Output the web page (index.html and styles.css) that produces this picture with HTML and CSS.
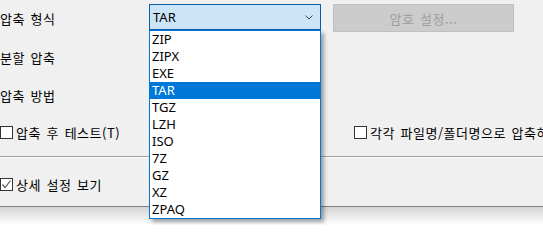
FILE: index.html
```html
<!DOCTYPE html>
<html lang="ko">
<head>
    <meta charset="UTF-8">
    <title>압축 옵션</title>
    <link rel="stylesheet" href="styles.css">
</head>
<body>
    <div class="panel">
        <div class="row row-format">
            <span class="label">압축 형식</span>
            <div class="combo">
                <span>TAR</span>
                <svg class="chevron" width="8" height="5" viewBox="0 0 8 5">
                    <path d="M0.5 0.5 L4 4 L7.5 0.5" fill="none" stroke="#444" stroke-width="1"/>
                </svg>
                <ul class="combo-list">
                    <li>ZIP</li>
                    <li>ZIPX</li>
                    <li>EXE</li>
                    <li class="selected">TAR</li>
                    <li>TGZ</li>
                    <li>LZH</li>
                    <li>ISO</li>
                    <li>7Z</li>
                    <li>GZ</li>
                    <li>XZ</li>
                    <li>ZPAQ</li>
                </ul>
            </div>
            <button class="btn" disabled>암호 설정...</button>
        </div>

        <div class="row row-split">
            <span class="label">분할 압축</span>
        </div>

        <div class="row row-method">
            <span class="label">압축 방법</span>
        </div>

        <div class="row row-checks">
            <label class="check check-left"><span class="box"></span>압축 후 테스트(T)</label>
            <label class="check"><span class="box"></span>각각 파일명/폴더명으로 압축하기</label>
        </div>

        <div class="separator"></div>

        <div class="row row-detail">
            <label class="check">
                <span class="box">
                    <svg width="11" height="11" viewBox="0 0 11 11">
                        <path d="M1.5 5.5 L4 8.5 L9.5 1.5" fill="none" stroke="#555" stroke-width="1.2"/>
                    </svg>
                </span>상세 설정 보기
            </label>
        </div>
    </div>
    <div class="shadow"></div>
</body>
</html>
```

FILE: styles.css
```css
body {
    margin: 0;
    background-color: #ffffff;
    font-family: "Noto Sans CJK KR", sans-serif;
    font-size: 13px;
    color: #000000;
    overflow: hidden;
}

.panel {
    background-color: #f0f0f0;
    height: 206px;
    border-bottom: 1px solid #7f7f7f;
    display: flex;
    flex-direction: column;
}

.shadow {
    height: 18px;
    background: linear-gradient(#d4d4d4, #ffffff);
}

.row {
    display: flex;
    align-items: center;
}

.row-format {
    margin-top: 4px;
    height: 28px;
}

.row-split { height: 50px; }
.row-method { height: 26px; }
.row-checks { height: 49px; }

.row-detail {
    height: 44px;
    padding-top: 4px;
}

.label {
    width: 149px;
    flex-shrink: 0;
    letter-spacing: 0.5px;
    word-spacing: 1.5px;
}

.combo {
    position: relative;
    box-sizing: border-box;
    width: 172px;
    height: 26px;
    margin-top: -2px;
    border: 1px solid #0a5aa5;
    background-color: #cce4f7;
    display: flex;
    align-items: center;
    justify-content: space-between;
    padding: 0 7px 0 3px;
    font-family: "Noto Sans", sans-serif;
}

.chevron {
    margin-top: 1px;
}

.combo-list {
    position: absolute;
    top: 25px;
    left: -1px;
    width: 172px;
    box-sizing: border-box;
    margin: 0;
    padding: 0;
    list-style: none;
    background-color: #ffffff;
    border: 1px solid #0078d7;
    box-shadow: 3px 3px 4px rgba(0, 0, 0, 0.35);
    z-index: 2;
}

.combo-list li {
    height: 17px;
    line-height: 17px;
    padding-left: 2px;
}

.combo-list li.selected {
    background-color: #0078d7;
    color: #ffffff;
}

.btn {
    margin-left: 12px;
    width: 181px;
    height: 28px;
    background-color: #cccccc;
    border: 1px solid #bfbfbf;
    color: #9d9d9d;
    font-family: inherit;
    font-size: 13px;
    letter-spacing: 0.5px;
    word-spacing: 1.5px;
    padding: 0;
}

.check {
    display: flex;
    align-items: center;
    white-space: nowrap;
    letter-spacing: 0.5px;
    word-spacing: 1.5px;
}

.check-left {
    width: 354px;
    flex-shrink: 0;
}

.check .box {
    box-sizing: border-box;
    width: 13px;
    height: 13px;
    border: 1px solid #333333;
    background-color: #ffffff;
    margin-right: 3px;
    display: flex;
    align-items: center;
    justify-content: center;
}

.separator {
    height: 1px;
    background-color: #a0a0a0;
    border-bottom: 1px solid #ffffff;
    margin-top: -1px;
}
```
